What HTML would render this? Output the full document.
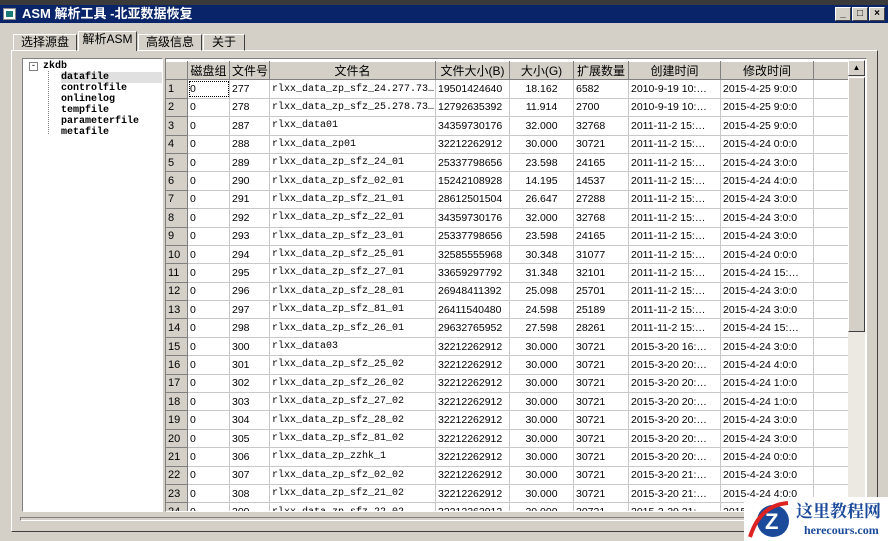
<!DOCTYPE html>
<html><head><meta charset="utf-8"><style>
*{box-sizing:border-box;margin:0;padding:0}
body{width:888px;height:541px;overflow:hidden;background:#d4d0c8;font-family:"Liberation Sans","SimSun","Noto Sans CJK SC",sans-serif;font-size:11px;color:#000;position:relative}
.top{position:absolute;left:0;top:0;width:888px;height:5px;background:#3a3a3a}
.title{position:absolute;left:0;top:5px;width:888px;height:18px;background:#0a246a;color:#fff;font-size:13px;font-weight:bold;line-height:18px;padding-left:22px;font-family:"Liberation Sans","Noto Sans CJK SC",sans-serif}
.ico{position:absolute;left:3px;top:8px;width:13px;height:12px;background:#fff;border:1px solid #888}
.ico:after{content:"";position:absolute;left:2px;top:2px;width:7px;height:6px;background:#1a7a7a}
.wb{position:absolute;top:7px;width:16px;height:14px;background:#d4d0c8;border:1px solid;border-color:#fff #404040 #404040 #fff;font-size:10px;line-height:12px;text-align:center;color:#000;font-weight:bold}
.tab{position:absolute;top:34px;height:17px;border:1px solid;border-color:#fff #404040 transparent #fff;font-size:12px;line-height:15px;text-align:center;font-family:"Liberation Sans","Noto Sans CJK SC",sans-serif}
.panel{position:absolute;left:11px;top:50px;width:867px;height:482px;border:1px solid;border-color:#fff #404040 #404040 #fff}
.tree{position:absolute;left:22px;top:58px;width:141px;height:454px;background:#fff;border:1px solid;border-color:#808080 #fff #fff #808080;font-family:"Liberation Mono",monospace;font-size:10px;font-weight:bold}
.tree div{position:absolute;height:11px;line-height:11px}
.grid{position:absolute;left:165px;top:58px;width:702px;height:454px;background:#fff;border:1px solid;border-color:#808080 #fff #fff #808080;overflow:hidden}
table{position:absolute;left:-1px;top:2px;border-collapse:collapse;table-layout:fixed;width:686px}
td,th{height:18.4px;border:1px solid #c8c8c8;padding:0 2px;white-space:nowrap;overflow:hidden;font-weight:normal;font-size:10.5px}
th{background:#d4d0c8;border:1px solid;border-color:#fff #808080 #808080 #fff;font-size:12px;font-family:"Liberation Sans","Noto Sans CJK SC",sans-serif;text-align:center}
td.h{background:#d4d0c8;border:1px solid;border-color:#fff #808080 #808080 #fff;font-size:11px}
td.n{font-family:"Liberation Mono",monospace;font-size:10px}
.sb{position:absolute;left:848px;top:60px;width:17px;height:451px;background:#ece9e2}
.sbb{position:absolute;left:0;width:17px;height:16px;background:#d4d0c8;border:1px solid;border-color:#fff #404040 #404040 #fff;font-size:8px;text-align:center;line-height:14px}
.thumb{position:absolute;left:0;top:17px;width:17px;height:255px;background:#d4d0c8;border:1px solid;border-color:#fff #404040 #404040 #fff}
.wm{position:absolute;left:744px;top:497px;width:144px;height:44px;background:#fff}
</style></head><body>
<div class="top"></div>
<div class="title">ASM 解析工具 -北亚数据恢复</div><div class="ico"></div>
<div class="wb" style="left:835px">_</div><div class="wb" style="left:852px">□</div><div class="wb" style="left:869px">×</div>
<div class="panel"></div>
<div class="tab" style="left:13px;width:64px">选择源盘</div>
<div class="tab" style="left:78px;width:59px;top:31px;height:20px;background:#d4d0c8;border-bottom:none">解析ASM</div>
<div class="tab" style="left:138px;width:64px">高级信息</div>
<div class="tab" style="left:203px;width:42px">关于</div>
<div class="tree">
<div style="left:6px;top:3px;width:9px;height:9px;border:1px solid #808080;font-size:9px;line-height:7px;text-align:center;font-weight:normal">-</div>
<div style="left:20px;top:2px">zkdb</div>
<div style="left:38px;top:13px;background:#e0e0e0;width:101px">datafile</div>
<div style="left:38px;top:24px">controlfile</div>
<div style="left:38px;top:35px">onlinelog</div>
<div style="left:38px;top:46px">tempfile</div>
<div style="left:38px;top:57px">parameterfile</div>
<div style="left:38px;top:68px">metafile</div>
<div style="left:25px;top:12px;width:1px;height:63px;border-left:1px dotted #808080"></div>
</div>
<div class="grid">
<table>
<colgroup><col style="width:22px"><col style="width:42px"><col style="width:40px"><col style="width:166px"><col style="width:74px"><col style="width:64px"><col style="width:55px"><col style="width:92px"><col style="width:93px"><col style="width:38px"></colgroup>
<tr><th></th><th>磁盘组</th><th>文件号</th><th>文件名</th><th>文件大小(B)</th><th>大小(G)</th><th>扩展数量</th><th>创建时间</th><th>修改时间</th><th></th></tr>
<tr><td class="h">1</td><td style="outline:1px dotted #000;outline-offset:-2px">0</td><td>277</td><td class="n">rlxx_data_zp_sfz_24.277.73…</td><td>19501424640</td><td style="text-align:center">18.162</td><td>6582</td><td>2010-9-19 10:…</td><td>2015-4-25 9:0:0</td><td></td></tr>
<tr><td class="h">2</td><td>0</td><td>278</td><td class="n">rlxx_data_zp_sfz_25.278.73…</td><td>12792635392</td><td style="text-align:center">11.914</td><td>2700</td><td>2010-9-19 10:…</td><td>2015-4-25 9:0:0</td><td></td></tr>
<tr><td class="h">3</td><td>0</td><td>287</td><td class="n">rlxx_data01</td><td>34359730176</td><td style="text-align:center">32.000</td><td>32768</td><td>2011-11-2 15:…</td><td>2015-4-25 9:0:0</td><td></td></tr>
<tr><td class="h">4</td><td>0</td><td>288</td><td class="n">rlxx_data_zp01</td><td>32212262912</td><td style="text-align:center">30.000</td><td>30721</td><td>2011-11-2 15:…</td><td>2015-4-24 0:0:0</td><td></td></tr>
<tr><td class="h">5</td><td>0</td><td>289</td><td class="n">rlxx_data_zp_sfz_24_01</td><td>25337798656</td><td style="text-align:center">23.598</td><td>24165</td><td>2011-11-2 15:…</td><td>2015-4-24 3:0:0</td><td></td></tr>
<tr><td class="h">6</td><td>0</td><td>290</td><td class="n">rlxx_data_zp_sfz_02_01</td><td>15242108928</td><td style="text-align:center">14.195</td><td>14537</td><td>2011-11-2 15:…</td><td>2015-4-24 4:0:0</td><td></td></tr>
<tr><td class="h">7</td><td>0</td><td>291</td><td class="n">rlxx_data_zp_sfz_21_01</td><td>28612501504</td><td style="text-align:center">26.647</td><td>27288</td><td>2011-11-2 15:…</td><td>2015-4-24 3:0:0</td><td></td></tr>
<tr><td class="h">8</td><td>0</td><td>292</td><td class="n">rlxx_data_zp_sfz_22_01</td><td>34359730176</td><td style="text-align:center">32.000</td><td>32768</td><td>2011-11-2 15:…</td><td>2015-4-24 3:0:0</td><td></td></tr>
<tr><td class="h">9</td><td>0</td><td>293</td><td class="n">rlxx_data_zp_sfz_23_01</td><td>25337798656</td><td style="text-align:center">23.598</td><td>24165</td><td>2011-11-2 15:…</td><td>2015-4-24 3:0:0</td><td></td></tr>
<tr><td class="h">10</td><td>0</td><td>294</td><td class="n">rlxx_data_zp_sfz_25_01</td><td>32585555968</td><td style="text-align:center">30.348</td><td>31077</td><td>2011-11-2 15:…</td><td>2015-4-24 0:0:0</td><td></td></tr>
<tr><td class="h">11</td><td>0</td><td>295</td><td class="n">rlxx_data_zp_sfz_27_01</td><td>33659297792</td><td style="text-align:center">31.348</td><td>32101</td><td>2011-11-2 15:…</td><td>2015-4-24 15:…</td><td></td></tr>
<tr><td class="h">12</td><td>0</td><td>296</td><td class="n">rlxx_data_zp_sfz_28_01</td><td>26948411392</td><td style="text-align:center">25.098</td><td>25701</td><td>2011-11-2 15:…</td><td>2015-4-24 3:0:0</td><td></td></tr>
<tr><td class="h">13</td><td>0</td><td>297</td><td class="n">rlxx_data_zp_sfz_81_01</td><td>26411540480</td><td style="text-align:center">24.598</td><td>25189</td><td>2011-11-2 15:…</td><td>2015-4-24 3:0:0</td><td></td></tr>
<tr><td class="h">14</td><td>0</td><td>298</td><td class="n">rlxx_data_zp_sfz_26_01</td><td>29632765952</td><td style="text-align:center">27.598</td><td>28261</td><td>2011-11-2 15:…</td><td>2015-4-24 15:…</td><td></td></tr>
<tr><td class="h">15</td><td>0</td><td>300</td><td class="n">rlxx_data03</td><td>32212262912</td><td style="text-align:center">30.000</td><td>30721</td><td>2015-3-20 16:…</td><td>2015-4-24 3:0:0</td><td></td></tr>
<tr><td class="h">16</td><td>0</td><td>301</td><td class="n">rlxx_data_zp_sfz_25_02</td><td>32212262912</td><td style="text-align:center">30.000</td><td>30721</td><td>2015-3-20 20:…</td><td>2015-4-24 4:0:0</td><td></td></tr>
<tr><td class="h">17</td><td>0</td><td>302</td><td class="n">rlxx_data_zp_sfz_26_02</td><td>32212262912</td><td style="text-align:center">30.000</td><td>30721</td><td>2015-3-20 20:…</td><td>2015-4-24 1:0:0</td><td></td></tr>
<tr><td class="h">18</td><td>0</td><td>303</td><td class="n">rlxx_data_zp_sfz_27_02</td><td>32212262912</td><td style="text-align:center">30.000</td><td>30721</td><td>2015-3-20 20:…</td><td>2015-4-24 1:0:0</td><td></td></tr>
<tr><td class="h">19</td><td>0</td><td>304</td><td class="n">rlxx_data_zp_sfz_28_02</td><td>32212262912</td><td style="text-align:center">30.000</td><td>30721</td><td>2015-3-20 20:…</td><td>2015-4-24 3:0:0</td><td></td></tr>
<tr><td class="h">20</td><td>0</td><td>305</td><td class="n">rlxx_data_zp_sfz_81_02</td><td>32212262912</td><td style="text-align:center">30.000</td><td>30721</td><td>2015-3-20 20:…</td><td>2015-4-24 3:0:0</td><td></td></tr>
<tr><td class="h">21</td><td>0</td><td>306</td><td class="n">rlxx_data_zp_zzhk_1</td><td>32212262912</td><td style="text-align:center">30.000</td><td>30721</td><td>2015-3-20 20:…</td><td>2015-4-24 0:0:0</td><td></td></tr>
<tr><td class="h">22</td><td>0</td><td>307</td><td class="n">rlxx_data_zp_sfz_02_02</td><td>32212262912</td><td style="text-align:center">30.000</td><td>30721</td><td>2015-3-20 21:…</td><td>2015-4-24 3:0:0</td><td></td></tr>
<tr><td class="h">23</td><td>0</td><td>308</td><td class="n">rlxx_data_zp_sfz_21_02</td><td>32212262912</td><td style="text-align:center">30.000</td><td>30721</td><td>2015-3-20 21:…</td><td>2015-4-24 4:0:0</td><td></td></tr>
<tr><td class="h">24</td><td>0</td><td>309</td><td class="n">rlxx_data_zp_sfz_22_02</td><td>32212262912</td><td style="text-align:center">30.000</td><td>30721</td><td>2015-3-20 21:…</td><td>2015-4-24 3:0:0</td><td></td></tr>
</table>
</div>
<div class="sb"><div class="sbb" style="top:0">▲</div><div class="thumb"></div></div>
<div style="position:absolute;left:20px;top:517px;width:848px;height:4px;border:1px solid;border-color:#808080 #fff #fff #808080"></div>
<div class="wm">
<svg width="50" height="44" style="position:absolute;left:2px;top:0"><circle cx="27" cy="24" r="16" fill="#1b4a9a"/><path d="M4 40 Q14 8 42 6" stroke="#d22" stroke-width="4" fill="none"/><text x="19" y="32" font-size="22" font-weight="bold" fill="#fff" font-family="Liberation Sans">Z</text></svg>
<div style="position:absolute;left:52px;top:3px;font-size:17px;line-height:20px;white-space:nowrap;font-weight:bold;color:#1b4a9a;font-family:'Noto Serif CJK SC',serif">这里教程网</div>
<div style="position:absolute;left:60px;top:26px;font-size:12px;white-space:nowrap;font-weight:bold;color:#1b4a9a;font-family:'Liberation Serif',serif">herecours.com</div>
</div>
</body></html>
